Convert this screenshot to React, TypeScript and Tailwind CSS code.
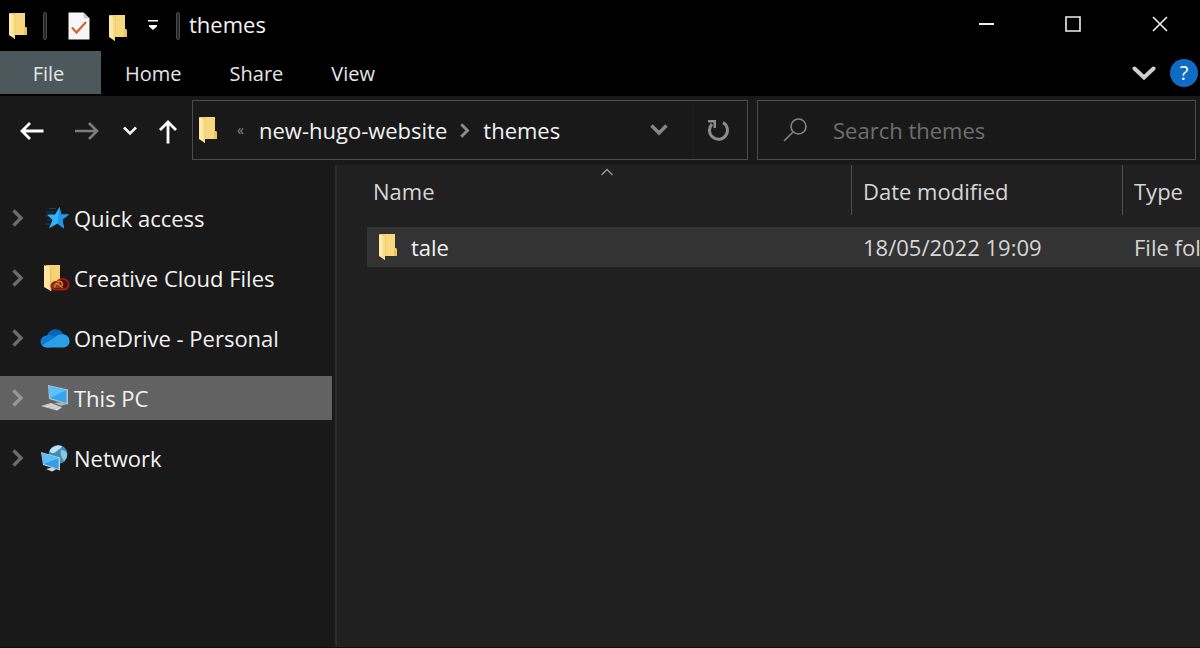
import React from 'react';

const FolderIcon: React.FC<{ className?: string }> = ({ className = '' }) => (
  <svg viewBox="0 0 18 26" className={`h-[26px] w-[18px] shrink-0 ${className}`} aria-hidden="true">
    <path d="M1 0h15v14l2 1v7H5z" fill="#f3cf6b" />
    <path d="M7 0h9v14l2 1v7H7z" fill="#f8d87f" />
    <path d="M16 14l2 1v7h-3v-7z" fill="#eec45c" />
    <path d="M0 0l6 3v23l-6-4z" fill="#ffe9a6" />
    <path d="M4 2l2 1v23l-2-1.5z" fill="#f8db8a" />
  </svg>
);

const DocumentIcon = () => (
  <svg viewBox="0 0 22 28" className="h-7 w-[22px] shrink-0" aria-hidden="true">
    <path d="M.5.5h15l6 6v21H.5z" fill="#f6f6f8" />
    <path d="M15.500.5v6h6z" fill="#c9c9d2" />
    <path d="M4 15.500l4.500 5L18 10" fill="none" stroke="#d2642f" strokeWidth="2.200" />
  </svg>
);

const StarIcon = () => (
  <svg viewBox="0 0 30 24" className="h-6 w-[30px]" aria-hidden="true">
    <path d="M9 2.500h7M6 6h8M5 10h7M7 14h4M5 18h6" stroke="#124a78" strokeWidth=".9" />
    <path d="M19.500 1l1.800 7.500H29l-6.500 5 1.500 9-6.500-5L9 22.500l3.500-8.500L7 8.500h8z" fill="#35b0fb" />
    <path d="M19.500 1l1.800 7.500H29l-6.500 5 1.500 9-6.500-5z" fill="#1e97ee" />
  </svg>
);

const CreativeCloudIcon = () => (
  <svg viewBox="0 0 30 28" className="h-7 w-[30px]" aria-hidden="true">
    <path d="M6 1h14v23H9z" fill="#f6d274" />
    <path d="M4 1l7 3v23l-7-4z" fill="#ffe7a2" />
    <path d="M10 3.500l1.500.7V27L10 26z" fill="#e9c15c" />
    <path
      d="M16 25.500c-4 0-5.500-3-4-5.500 1-2 3.500-2.500 5-2 2-3.500 8-4.500 10.500-1 2.500 4 .5 8.500-4.500 8.500z"
      fill="#5a0d0a"
      fillOpacity=".75"
      stroke="#a01c14"
      strokeWidth="1.800"
    />
    <path d="M15 23.500c-1-3 2-5 4-3l3.500 3.500M17.500 18c3-2 6 1 4.500 4" fill="none" stroke="#e8752f" strokeWidth="1.600" />
  </svg>
);

const OneDriveIcon = () => (
  <svg viewBox="0 0 30 20" className="h-5 w-[30px]" aria-hidden="true">
    <path d="M7 8C9 0 20-1.500 23.500 6.500L19 14 6 17z" fill="#0864b8" />
    <path d="M6.500 7.500c3-1.500 6-.5 8.500 1.500l6 4-11 6.500H6.500C-1.500 19-1.500 8.500 6.500 7.500z" fill="#127bd2" />
    <path d="M14 10c2.500-3.500 7-4.500 10-3.500 7 1 8 12-.5 13H7c-2 0-4-.7-5-2z" fill="#2a9ee9" />
  </svg>
);

const ComputerIcon = () => (
  <svg viewBox="0 0 30 28" className="h-7 w-[30px]" aria-hidden="true">
    <path d="M8 1l20 4.500v15L9 15z" fill="#b7c4cc" />
    <path d="M9 2.200l17.500 4V19L10 14z" fill="#33a5ee" />
    <path d="M9 2.200l17.500 4L10 14z" fill="#5cc2fb" />
    <path d="M14 19l8-1 5 2-6 2z" fill="#a9b2b8" />
    <path d="M1 22l10-3 11 4.500-5 3z" fill="#d5dadd" />
    <path d="M4 22l7-2M8 23.500l7-2M12 25l7-2" stroke="#aab1b5" strokeWidth=".7" />
  </svg>
);

const NetworkIcon = () => (
  <svg viewBox="0 0 30 28" className="h-7 w-[30px]" aria-hidden="true">
    <circle cx="18" cy="10.500" r="9.500" fill="#3f8fb5" />
    <path d="M10 6c3-4 8-5.500 12-4-1 3-3 3-5 5s-5 3-7 1z" fill="#bfe3f0" />
    <path d="M21 6c3 0 5 1 6 4 0 3-1 5-3 7-2-3-4-6-3-11z" fill="#8cc8dd" />
    <path d="M1 8l19 5.500v13L3 21z" fill="#bccbd3" />
    <path d="M2 9.300l16.500 5V25L3.500 20z" fill="#2f9fe8" />
    <path d="M2 9.300l16.500 5L3.500 20z" fill="#5bc0fa" />
    <path d="M6 25l6-1.500 4 2-4 2z" fill="#d3d9dc" />
  </svg>
);

const Chevron: React.FC<{ className?: string }> = ({ className = '' }) => (
  <svg viewBox="0 0 12 18" className={className} fill="none" stroke="currentColor" strokeWidth="3.500" aria-hidden="true">
    <path d="M1.500 1.500L9 9l-7.500 7.500" />
  </svg>
);

const places = [
  { name: 'Quick access', icon: <StarIcon /> },
  { name: 'Creative Cloud Files', icon: <CreativeCloudIcon /> },
  { name: 'OneDrive - Personal', icon: <OneDriveIcon /> },
  { name: 'This PC', icon: <ComputerIcon />, active: true },
  { name: 'Network', icon: <NetworkIcon /> },
];

const files = [{ name: 'tale', modified: '18/05/2022 19:09', type: 'File folder' }];

const TitleBar = () => (
  <header className="flex h-[51px] items-center pl-[9px]">
    <FolderIcon />
    <span className="ml-4 h-7 w-1 rounded-sm border border-[#4a4a4a] bg-[#262626]" />
    <button type="button" aria-label="Properties" className="ml-[21px]">
      <DocumentIcon />
    </button>
    <button type="button" aria-label="New folder" className="ml-[19px] pt-1">
      <FolderIcon />
    </button>
    <button type="button" aria-label="Customize toolbar" className="ml-[21px]">
      <svg viewBox="0 0 10 11" className="h-[11px] w-2.5" fill="#fff" aria-hidden="true">
        <path d="M0 0h10v1.500H0zM1 5h8v1.500L5 10 1 6.500z" />
      </svg>
    </button>
    <span className="ml-[18px] h-7 w-1 rounded-sm border border-[#4a4a4a] bg-[#262626]" />
    <h1 className="ml-[9px] pb-1 text-[22px] leading-7">themes</h1>
    <div className="ml-auto flex h-full items-center gap-[7px] pb-1">
      <button type="button" aria-label="Minimize" className="flex h-full w-20 items-center justify-center">
        <span className="h-0.5 w-[15px] bg-[#f0f0f0]" />
      </button>
      <button type="button" aria-label="Maximize" className="flex h-full w-20 items-center justify-center">
        <svg viewBox="0 0 16 16" className="size-4" fill="none" stroke="#eee" strokeWidth="1.600" aria-hidden="true">
          <path d="M1 1h14v14H1z" />
        </svg>
      </button>
      <button type="button" aria-label="Close" className="flex h-full w-20 items-center justify-center">
        <svg viewBox="0 0 16 16" className="size-4" stroke="#eee" strokeWidth="1.600" aria-hidden="true">
          <path d="M1 1l14 14M15 1L1 15" />
        </svg>
      </button>
    </div>
  </header>
);

const Ribbon = () => (
  <nav className="flex h-[45px] items-start text-[20px] leading-7 text-[#e6e6e6]">
    <button type="button" className="h-[43px] w-[101px] bg-[#4d585c] pr-1 pt-0.5">
      File
    </button>
    {['Home', 'Share', 'View'].map((tab) => (
      <button key={tab} type="button" className="h-[43px] px-6 pt-0.5">
        {tab}
      </button>
    ))}
    <div className="ml-auto flex h-[43px] items-center gap-[14px] pr-0.5">
      <button type="button" aria-label="Expand the ribbon">
        <svg viewBox="0 0 24 14" className="h-3.5 w-6" fill="none" stroke="#cfcfcf" strokeWidth="4" strokeLinecap="round" aria-hidden="true">
          <path d="M2.500 2.500l9.500 9 9.500-9" />
        </svg>
      </button>
      <button
        type="button"
        aria-label="Help"
        className="flex size-7 items-center justify-center rounded-full bg-[#0f6cc4] text-[20px] leading-7 text-white"
      >
        ?
      </button>
    </div>
  </nav>
);

const AddressRow = () => (
  <div className="flex h-[69px] items-start bg-[#191919] pt-1 pr-1">
    <div className="flex h-[60px] w-[192px] shrink-0 items-center pl-5 pt-0.5">
      <button type="button" aria-label="Back">
        <svg viewBox="0 0 24 18" className="h-[18px] w-6" fill="none" stroke="#fff" strokeWidth="2.800" aria-hidden="true">
          <path d="M23.500 9H2M10 1L2 9l8 8" />
        </svg>
      </button>
      <button type="button" aria-label="Forward" className="ml-[31px]">
        <svg viewBox="0 0 24 18" className="h-[18px] w-6" fill="none" stroke="#7d7d7d" strokeWidth="2.600" aria-hidden="true">
          <path d="M0 9h22M14 1l8 8-8 8" />
        </svg>
      </button>
      <button type="button" aria-label="Recent locations" className="ml-6">
        <svg viewBox="0 0 14 10" className="h-2.5 w-3.5" fill="none" stroke="#f2f2f2" strokeWidth="2.600" aria-hidden="true">
          <path d="M1 1.500l6 6 6-6" />
        </svg>
      </button>
      <button type="button" aria-label="Up" className="ml-[22px] pt-0.5">
        <svg viewBox="0 0 18 24" className="h-6 w-[18px]" fill="none" stroke="#fff" strokeWidth="2.800" aria-hidden="true">
          <path d="M9 23.500V2M1 10l8-8 8 8" />
        </svg>
      </button>
    </div>
    <div className="grid flex-1 grid-cols-[556fr_439fr] gap-[9px] text-[22px] leading-7">
      <div className="flex h-[60px] items-center border border-[#4b4b4b] pl-1.5">
        <FolderIcon />
        <span className="ml-5 w-[22px] text-sm text-[#8a8a8a]">«</span>
        <button type="button">new-hugo-website</button>
        <Chevron className="mx-[13px] h-[15px] w-2.5 text-[#8c8c8c]" />
        <button type="button">themes</button>
        <button type="button" aria-label="Previous locations" className="ml-auto mr-[25px]">
          <svg viewBox="0 0 18 12" className="h-3 w-[18px]" fill="none" stroke="#858585" strokeWidth="3.500" aria-hidden="true">
            <path d="M1.500 1.500L9 9l7.500-7.500" />
          </svg>
        </button>
        <button type="button" aria-label="Refresh" className="flex h-full w-[54px] items-center justify-center border-l border-[#1d1d1d] pr-1.5">
          <svg viewBox="0 0 22 22" className="size-[22px]" fill="none" stroke="#8c8c8c" strokeWidth="3" aria-hidden="true">
            <path d="M16 3.500A9 9 0 1 1 5 5" />
            <path d="M1 1h8v8H6.500V3.500H1z" fill="#8c8c8c" stroke="none" />
          </svg>
        </button>
      </div>
      <label className="flex h-[60px] min-w-0 items-center border border-[#4b4b4b] pl-[25px]">
        <svg viewBox="0 0 24 24" className="size-6 shrink-0" fill="none" stroke="#828282" strokeWidth="1.600" aria-hidden="true">
          <circle cx="15.500" cy="8.500" r="7.500" />
          <path d="M10 14L1 23" />
        </svg>
        <input
          type="search"
          aria-label="Search themes"
          placeholder="Search themes"
          className="ml-[26px] min-w-0 flex-1 bg-transparent outline-none placeholder:text-[#6f6f6f]"
        />
      </label>
    </div>
  </div>
);

const Sidebar = () => (
  <aside className="w-[337px] shrink-0 border-r-2 border-[#2d2d2d] bg-[#191919] pr-[3px] pt-[31px]">
    <ul className="flex flex-col gap-4">
      {places.map((place) => (
        <li key={place.name}>
          <a
            href="#"
            className={`flex h-11 items-center pl-3 text-[22px] leading-7 ${place.active ? 'bg-[#626262]' : ''}`}
          >
            <Chevron className={`h-[18px] w-3 ${place.active ? 'text-[#969696]' : 'text-[#6a6a6a]'}`} />
            <span className="ml-4 mr-1 flex w-[30px] justify-center">{place.icon}</span>
            {place.name}
          </a>
        </li>
      ))}
    </ul>
  </aside>
);

const FileList = () => (
  <main className="min-w-0 flex-1 overflow-hidden bg-[#202020] pl-[30px]">
    <table className="w-full table-fixed border-separate border-spacing-0 text-left text-[22px] leading-7 text-[#d6d6d6]">
      <colgroup>
        <col />
        <col className="w-[271px]" />
        <col className="w-[78px]" />
      </colgroup>
      <thead>
        <tr>
          <th className="relative p-0 pb-3 font-normal">
            <div className="flex h-[50px] items-center pl-1.5 pt-0.5">Name</div>
            <svg
              viewBox="0 0 12 8"
              className="absolute left-1/2 top-[3px] h-2 w-3 -translate-x-2"
              fill="none"
              stroke="#9a9a9a"
              strokeWidth="1.300"
              aria-hidden="true"
            >
              <path d="M.5 7L6 1.500 11.500 7" />
            </svg>
          </th>
          {['Date modified', 'Type'].map((label) => (
            <th key={label} className="p-0 pb-3 font-normal">
              <div className="flex h-[50px] items-center border-l border-[#4f4f4f] pl-[11px] pt-0.5">{label}</div>
            </th>
          ))}
        </tr>
      </thead>
      <tbody>
        {files.map((file) => (
          <tr key={file.name} className="bg-[#333333]">
            <td className="h-10 p-0">
              <div className="flex items-center pl-3 text-[#f2f2f2]">
                <FolderIcon />
                <span className="ml-[14px]">{file.name}</span>
              </div>
            </td>
            <td className="p-0 pl-3">{file.modified}</td>
            <td className="overflow-hidden whitespace-nowrap p-0 pl-3">{file.type}</td>
          </tr>
        ))}
      </tbody>
    </table>
  </main>
);

const App: React.FC = () => (
  <div className="flex min-h-screen flex-col border-b border-[#140d10] bg-black font-['Open_Sans','Noto_Sans',sans-serif] text-[#f2f2f2]">
    <TitleBar />
    <Ribbon />
    <AddressRow />
    <div className="flex flex-1">
      <Sidebar />
      <FileList />
    </div>
  </div>
);

export default App;
